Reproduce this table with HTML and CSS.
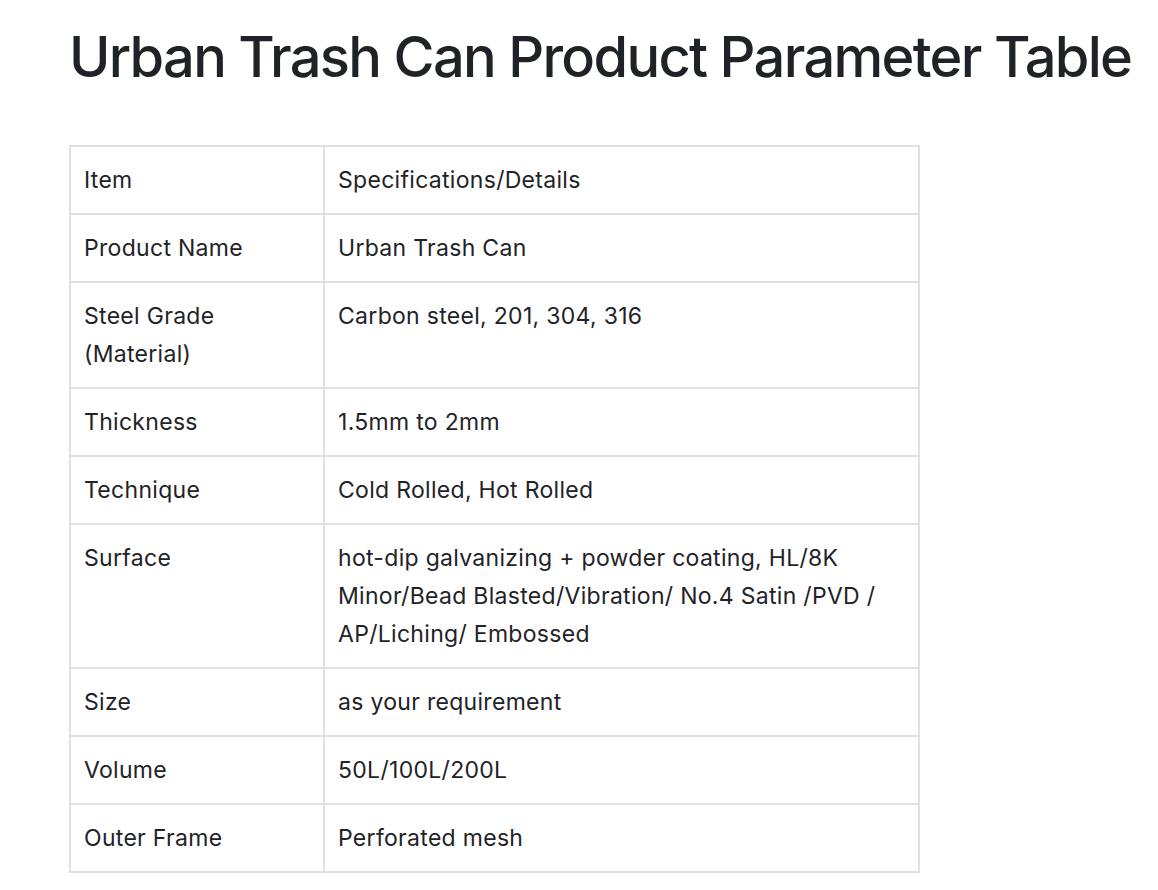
FILE: index.html
```html
<!DOCTYPE html>
<html>
<head>
<meta charset="utf-8">
<link rel="stylesheet" href="styles.css">
</head>
<body>
<main class="doc">
  <h1 class="title">Urban Trash Can Product Parameter Table</h1>
  <table class="params">
    <colgroup><col class="c1"><col class="c2"></colgroup>
    <tbody>
      <tr><td>Item</td><td>Specifications/Details</td></tr>
      <tr><td>Product Name</td><td>Urban Trash Can</td></tr>
      <tr><td>Steel Grade (Material)</td><td>Carbon steel, 201, 304, 316</td></tr>
      <tr><td>Thickness</td><td>1.5mm to 2mm</td></tr>
      <tr><td>Technique</td><td>Cold Rolled, Hot Rolled</td></tr>
      <tr><td>Surface</td><td>hot-dip galvanizing + powder coating, HL/8K Minor/Bead Blasted/Vibration/ No.4 Satin /PVD / AP/Liching/ Embossed</td></tr>
      <tr><td>Size</td><td>as your requirement</td></tr>
      <tr><td>Volume</td><td>50L/100L/200L</td></tr>
      <tr><td>Outer Frame</td><td>Perforated mesh</td></tr>
    </tbody>
  </table>
</main>
</body>
</html>
```

FILE: styles.css
```css
html, body {
  margin: 0;
  padding: 0;
  background: #ffffff;
}
body {
  font-family: Inter, "Noto Sans", "Liberation Sans", sans-serif;
  color: #1f2328;
}
.doc {
  padding: 22px 0 0 69px;
}
.title {
  margin: 0 0 53px 0;
  font-size: 56px;
  line-height: 70px;
  font-weight: 500;
  letter-spacing: -1.7px;
  white-space: nowrap;
  color: #1f2328;
}
.params {
  border-collapse: collapse;
  table-layout: fixed;
  width: 849px;
  font-size: 23px;
  line-height: 38px;
  letter-spacing: 0.3px;
  color: #1f2328;
}
.c1 { width: 254px; }
.c2 { width: 595px; }
.params td {
  border: 2px solid #dfe1e4;
  padding: 14px 13px;
  vertical-align: top;
}
```
